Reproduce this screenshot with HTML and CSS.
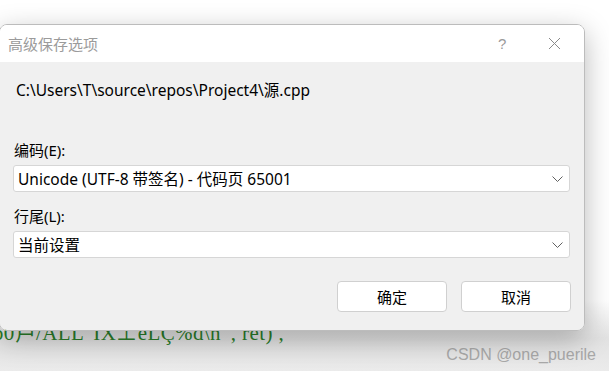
FILE: index.html
```html
<!DOCTYPE html>
<html lang="zh-CN">

<head>
    <meta charset="UTF-8">
    <meta name="viewport" content="width=device-width, initial-scale=1.0">
    <title>高级保存选项</title>
    <link rel="stylesheet" href="styles.css">
</head>

<body>

    <div class="desk">
        <p class="code">ɔ0卢/ALL 'IX⊥eLÇ%d\n' ,  ret) ,</p>
        <p class="mark">CSDN @one_puerile</p>
    </div>

    <div class="dialog">
        <div class="titlebar">
            <span class="title">高级保存选项</span>
            <span class="help">?</span>
            <span class="close">
                <svg width="13" height="13" viewBox="0 0 13 13">
                    <path d="M1 1 L12 12 M12 1 L1 12" stroke="#8a8a8a" stroke-width="1" fill="none" />
                </svg>
            </span>
        </div>
        <div class="body">
            <p class="path">C:\Users\T\source\repos\Project4\源.cpp</p>

            <label class="lbl">编码(E):</label>
            <div class="select">
                <span>Unicode (UTF-8 带签名) - 代码页 65001</span>
                <svg width="11" height="6" viewBox="0 0 11 6">
                    <path d="M0.5 0.5 L5.5 5.5 L10.5 0.5" stroke="#606060" stroke-width="1" fill="none" />
                </svg>
            </div>

            <label class="lbl lbl2">行尾(L):</label>
            <div class="select">
                <span>当前设置</span>
                <svg width="11" height="6" viewBox="0 0 11 6">
                    <path d="M0.5 0.5 L5.5 5.5 L10.5 0.5" stroke="#606060" stroke-width="1" fill="none" />
                </svg>
            </div>

            <div class="actions">
                <button>确定</button>
                <button>取消</button>
            </div>
        </div>
    </div>

</body>

</html>
```

FILE: styles.css
```css
* {
    box-sizing: border-box;
}

body {
    margin: 0;
    width: 609px;
    height: 371px;
    overflow: hidden;
    position: relative;
    background-color: #ffffff;
    font-family: "Noto Sans", "Noto Sans CJK SC", sans-serif;
    color: #000;
}

p {
    margin: 0;
}

/* page behind the dialog */
.desk {
    padding-top: 320px;
    height: 371px;
    background: linear-gradient(to bottom, #ffffff 0, #ffffff 300px, #e2e2e2 338px, #ebebeb 371px);
}

.code {
    font-family: "Liberation Serif", serif;
    font-size: 21px;
    line-height: 26px;
    color: #2a7d2a;
    margin-left: -6px;
    letter-spacing: 0.4px;
    white-space: nowrap;
}

.mark {
    text-align: right;
    padding-right: 13px;
    font-family: "Liberation Sans", sans-serif;
    font-size: 16px;
    line-height: 18px;
    color: #a9a9a9;
}

/* the window */
.dialog {
    position: absolute;
    left: -1px;
    top: 24px;
    width: 586px;
    border: 1px solid #bcbcbc;
    border-radius: 8px;
    overflow: hidden;
    box-shadow: 0 8px 28px rgba(0, 0, 0, 0.28);
}

.titlebar {
    height: 37px;
    background-color: #ffffff;
    display: flex;
    align-items: center;
    padding-left: 8px;
}

.title {
    font-size: 15px;
    color: #9b9b9b;
    flex: 1;
}

.help {
    font-size: 15px;
    color: #9a9a9a;
    width: 50px;
    font-family: "Liberation Sans", sans-serif;
}

.close {
    width: 36px;
    display: flex;
    align-items: center;
}

.body {
    background-color: #f0f0f0;
    padding: 18px 14px 18px 13px;
    display: flex;
    flex-direction: column;
}

.path {
    font-size: 15.5px;
    line-height: 21px;
    margin-left: 3px;
}

.lbl {
    font-size: 15px;
    line-height: 20px;
    margin-top: 39px;
    margin-left: 1px;
}

.lbl2 {
    margin-top: 14px;
}

.select {
    margin-top: 5px;
    height: 27px;
    background-color: #ffffff;
    border: 1px solid #d6d6d6;
    border-radius: 3px;
    display: flex;
    align-items: center;
    justify-content: space-between;
    padding: 0 6px 0 4px;
    font-size: 15.5px;
}

.actions {
    margin-top: 23px;
    display: flex;
    justify-content: flex-end;
    gap: 14px;
    margin-right: -1px;
}

button {
    width: 110px;
    height: 31px;
    background-color: #ffffff;
    border: 1px solid #d0d0d0;
    border-radius: 4px;
    font-family: "Noto Sans CJK SC", sans-serif;
    font-size: 15px;
    color: #000;
}
```
